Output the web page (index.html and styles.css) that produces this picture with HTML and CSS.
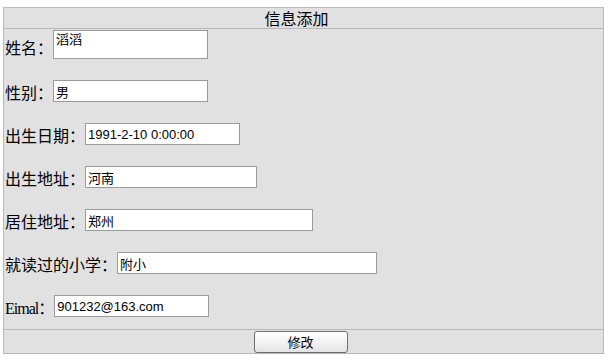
FILE: index.html
```html
<!DOCTYPE html>
<html lang="zh-CN">
<head>
<meta charset="utf-8">
<title>信息添加</title>
<link rel="stylesheet" href="styles.css">
</head>
<body>
<div class="panel">
  <div class="panel-head">信息添加</div>
  <div class="panel-body">
    <div class="row row-tall">
      <span class="label">姓名：</span>
      <textarea class="field w155 tall" readonly>滔滔</textarea>
    </div>
    <div class="row">
      <span class="label">性别：</span>
      <input class="field w155" type="text" value="男" readonly>
    </div>
    <div class="row">
      <span class="label">出生日期：</span>
      <input class="field w155" type="text" value="1991-2-10 0:00:00" readonly>
    </div>
    <div class="row">
      <span class="label">出生地址：</span>
      <input class="field w172" type="text" value="河南" readonly>
    </div>
    <div class="row">
      <span class="label">居住地址：</span>
      <input class="field w228" type="text" value="郑州" readonly>
    </div>
    <div class="row">
      <span class="label">就读过的小学：</span>
      <input class="field w260" type="text" value="附小" readonly>
    </div>
    <div class="row">
      <span class="label"><span class="latin">Eimal</span>：</span>
      <input class="field w155" type="text" value="901232@163.com" readonly>
    </div>
  </div>
  <div class="panel-foot">
    <button class="btn" type="button">修改</button>
  </div>
</div>
</body>
</html>
```
FILE: styles.css
```css
html, body {
  margin: 0;
  padding: 0;
  background: #ffffff;
}

body {
  padding: 7px 0 0 3px;
  font-family: "Liberation Serif", "Noto Sans CJK SC", serif;
  color: #000;
}

.panel {
  width: 599px;
  border: 1px solid #b9b9b9;
  background: #e1e1e1;
}

.panel-head {
  height: 20px;
  line-height: 20px;
  font-size: 16px;
  text-align: center;
  padding-right: 14px;
  border-bottom: 1px solid #b9b9b9;
  font-family: "Noto Sans CJK SC", sans-serif;
}

.panel-body {
  height: 300px;
  box-sizing: border-box;
  padding: 1px 0 0 1px;
  display: flex;
  flex-direction: column;
  gap: 21px;
}

.row {
  display: flex;
  align-items: flex-end;
  height: 22px;
}

.row-tall {
  height: 29px;
}

.label {
  font-size: 16px;
  line-height: 17px;
  white-space: nowrap;
  font-family: "Liberation Serif", "Noto Sans CJK SC", serif;
}

.row-tall .label {
  margin-bottom: 2px;
}

.latin {
  letter-spacing: -1px;
}

.field {
  box-sizing: border-box;
  height: 22px;
  margin: 0;
  padding: 1px 2px 0;
  border: 1px solid #9a9a9a;
  background: #fff;
  font-family: "Liberation Sans", "Noto Sans CJK SC", sans-serif;
  font-size: 13px;
  color: #000;
  outline: none;
}

.tall {
  height: 29px;
  resize: none;
  overflow: hidden;
  line-height: 15px;
  padding: 1px 2px;
}

.w155 { width: 155px; }
.w172 { width: 172px; }
.w228 { width: 228px; }
.w260 { width: 260px; }

.panel-foot {
  border-top: 1px solid #b9b9b9;
  height: 24px;
  box-sizing: border-box;
  padding: 1px 6px 1px 0;
  display: flex;
  justify-content: center;
}

.btn {
  width: 94px;
  height: 22px;
  margin: 0;
  padding: 0;
  border: 1px solid #6f6f6f;
  border-radius: 3px;
  background: linear-gradient(#ffffff, #f3f3f3 50%, #e3e3e3);
  font-family: "Noto Sans CJK SC", sans-serif;
  font-size: 13px;
  line-height: 18px;
  color: #000;
}
```
